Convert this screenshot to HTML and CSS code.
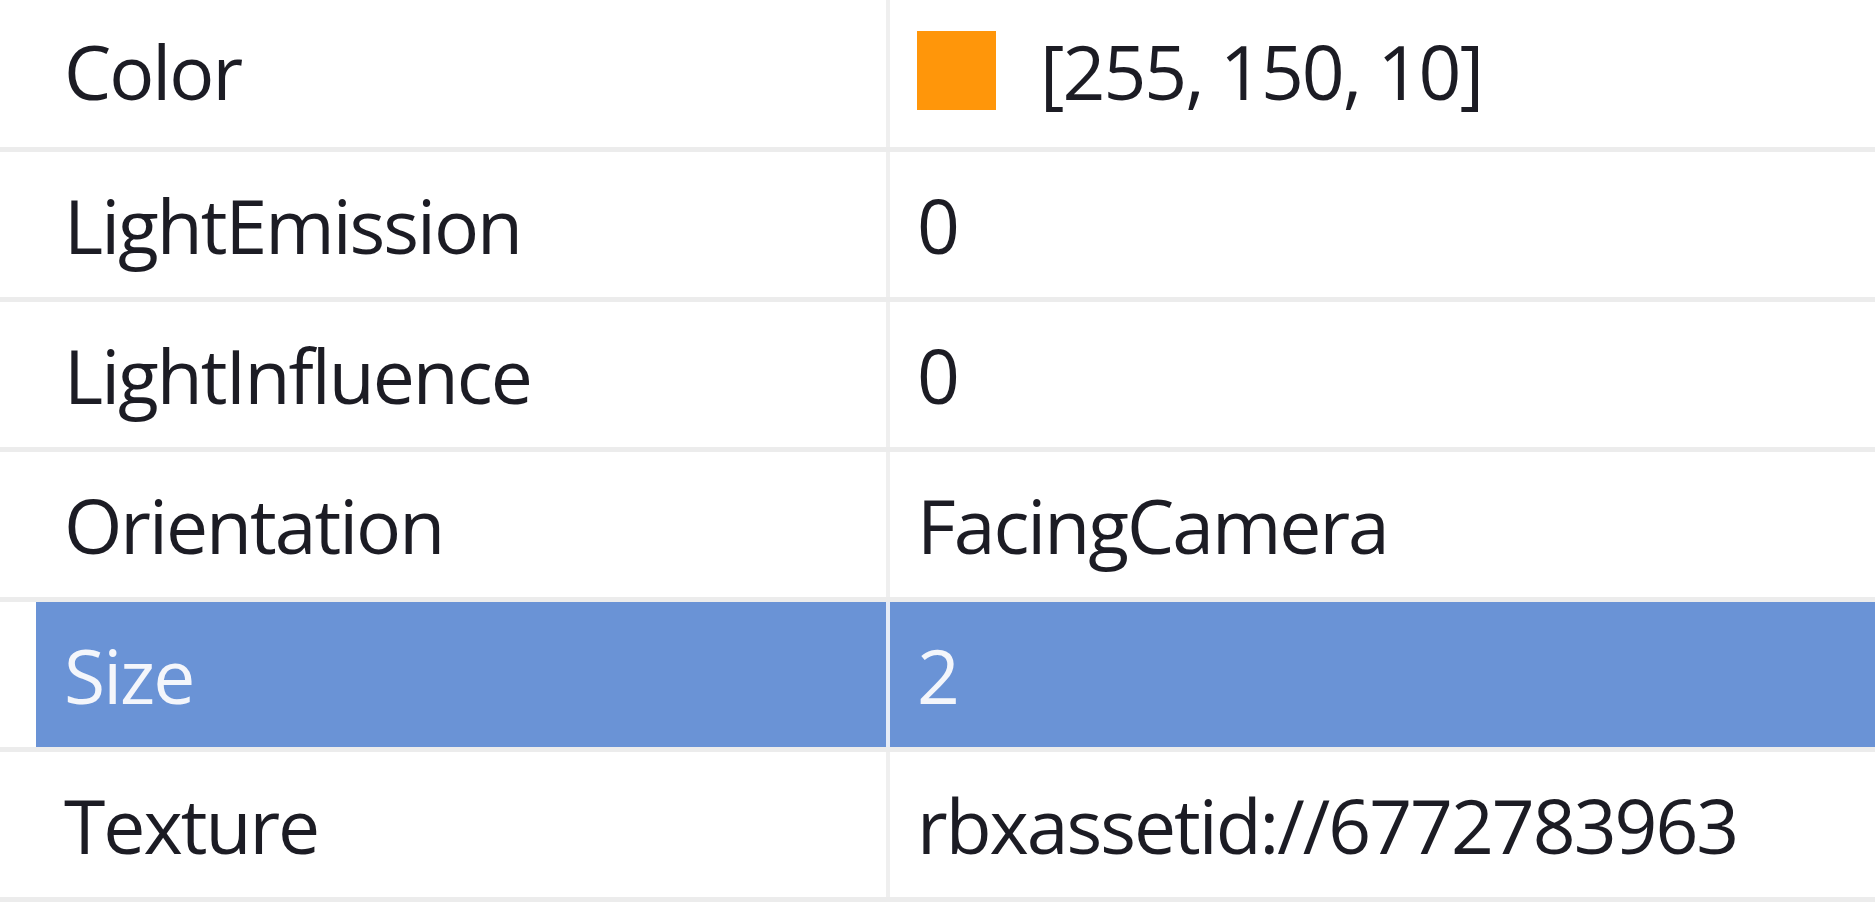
FILE: index.html
```html
<!DOCTYPE html>
<html lang="en">
<head>
<meta charset="utf-8">
<title>Properties</title>
<link rel="stylesheet" href="styles.css">
</head>
<body>
<div class="props">
  <div class="row row-first">
    <div class="name">Color</div>
    <div class="value"><span class="swatch"></span><span>[255, 150, 10]</span></div>
  </div>
  <div class="row">
    <div class="name">LightEmission</div>
    <div class="value">0</div>
  </div>
  <div class="row">
    <div class="name">LightInfluence</div>
    <div class="value">0</div>
  </div>
  <div class="row">
    <div class="name">Orientation</div>
    <div class="value">FacingCamera</div>
  </div>
  <div class="row row-selected">
    <div class="name">Size</div>
    <div class="value">2</div>
  </div>
  <div class="row">
    <div class="name">Texture</div>
    <div class="value">rbxassetid://6772783963</div>
  </div>
</div>
</body>
</html>
```
FILE: styles.css
```css
html, body {
  margin: 0;
  padding: 0;
  background: #ffffff;
}

body {
  width: 1875px;
  height: 906px;
  overflow: hidden;
  font-family: "Open Sans", "Noto Sans", sans-serif;
  font-size: 75px;
  letter-spacing: -2px;
  color: #1c1c24;
}

.props {
  display: flex;
  flex-direction: column;
}

.row {
  display: flex;
  height: 145px;
  border-bottom: 5px solid #ececec;
}

.row-first {
  height: 147px;
}

.row-first .name,
.row-first .value {
  padding-bottom: 6px;
}

.name {
  width: 822px;
  margin-left: 36px;
  padding-left: 28px;
  display: flex;
  align-items: center;
  white-space: nowrap;
}

.value {
  flex: 1;
  border-left: 4px solid #efefef;
  padding-left: 27px;
  display: flex;
  align-items: center;
  white-space: nowrap;
}

.swatch {
  width: 79px;
  height: 79px;
  background: #ff960a;
  margin-right: 44px;
  flex: none;
}

.row-selected .name,
.row-selected .value {
  background: #6a93d6;
  color: #f4f6fb;
}

.row-selected .value {
  border-left-color: #e6ecf7;
}
```
